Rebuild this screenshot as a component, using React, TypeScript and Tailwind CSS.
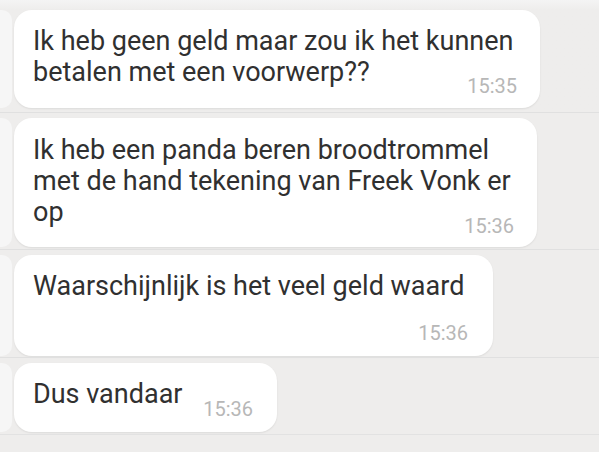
import React from "react";

const ts = "text-[20px] leading-[20px] text-[#b7b7b7] whitespace-nowrap shrink-0";
const txt = "text-[27px] leading-[31px] text-[#303030] whitespace-nowrap";

function Strip({ h }: { h: string }) {
  return <div className={`w-[12px] ${h} bg-[#f6f6f6] rounded-r-[10px] shrink-0`} />;
}

export default function App() {
  return (
    <div className="w-[599px] h-[452px] overflow-hidden bg-[#eeedec] font-['Roboto',sans-serif] flex flex-col">
      {/* Row 1 */}
      <div className="h-[112px] pt-[10px] flex gap-[2px] bg-gradient-to-b from-[#f4f4f4] to-[#eeedec] to-[10px]">
        <Strip h="h-[98px]" />
        <div className="w-[526px] h-[98px] shrink-0 bg-white rounded-[18px] shadow-[0_1px_2px_rgba(0,0,0,0.08)] pl-[19px] pr-[23px] pt-[16px] flex flex-col">
          <div className={txt}>
            Ik heb geen geld maar zou ik het kunnen
            <br />
            betalen met een voorwerp??
          </div>
          <span className={`${ts} self-end -mt-[12px]`}>15:35</span>
        </div>
      </div>
      <div className="h-px bg-[#e0e0e0]" />
      {/* Row 2 */}
      <div className="h-[136px] pt-[5px] flex gap-[2px]">
        <Strip h="h-[129px]" />
        <div className="w-[523px] h-[129px] shrink-0 bg-white rounded-[18px] shadow-[0_1px_2px_rgba(0,0,0,0.08)] pl-[19px] pr-[23px] pt-[17px] flex flex-col">
          <div className={txt}>
            Ik heb een panda beren broodtrommel
            <br />
            met de hand tekening van Freek Vonk er
            <br />
            op
          </div>
          <span className={`${ts} self-end -mt-[12px]`}>15:36</span>
        </div>
      </div>
      <div className="h-px bg-[#e0e0e0]" />
      {/* Row 3 */}
      <div className="h-[107px] pt-[5px] flex gap-[2px]">
        <Strip h="h-[101px]" />
        <div className="w-[479px] h-[101px] shrink-0 bg-white rounded-[18px] shadow-[0_1px_2px_rgba(0,0,0,0.08)] pl-[19px] pr-[25px] pt-[16px] pb-[13px] flex flex-col justify-between">
          <div className={txt}>Waarschijnlijk is het veel geld waard</div>
          <span className={`${ts} self-end`}>15:36</span>
        </div>
      </div>
      <div className="h-px bg-[#e0e0e0]" />
      {/* Row 4 */}
      <div className="h-[76px] pt-[5px] flex gap-[2px]">
        <Strip h="h-[69px]" />
        <div className="w-[263px] h-[69px] shrink-0 bg-white rounded-[18px] shadow-[0_1px_2px_rgba(0,0,0,0.08)] pl-[19px] pr-[24px] pt-[16px] pb-[13px] flex items-end justify-between">
          <div className={`${txt} mb-[8px] self-start`}>Dus vandaar</div>
          <span className={ts}>15:36</span>
        </div>
      </div>
      <div className="h-px bg-[#e2e2e2]" />
      <div className="flex-1 bg-[#eeedec]" />
    </div>
  );
}
